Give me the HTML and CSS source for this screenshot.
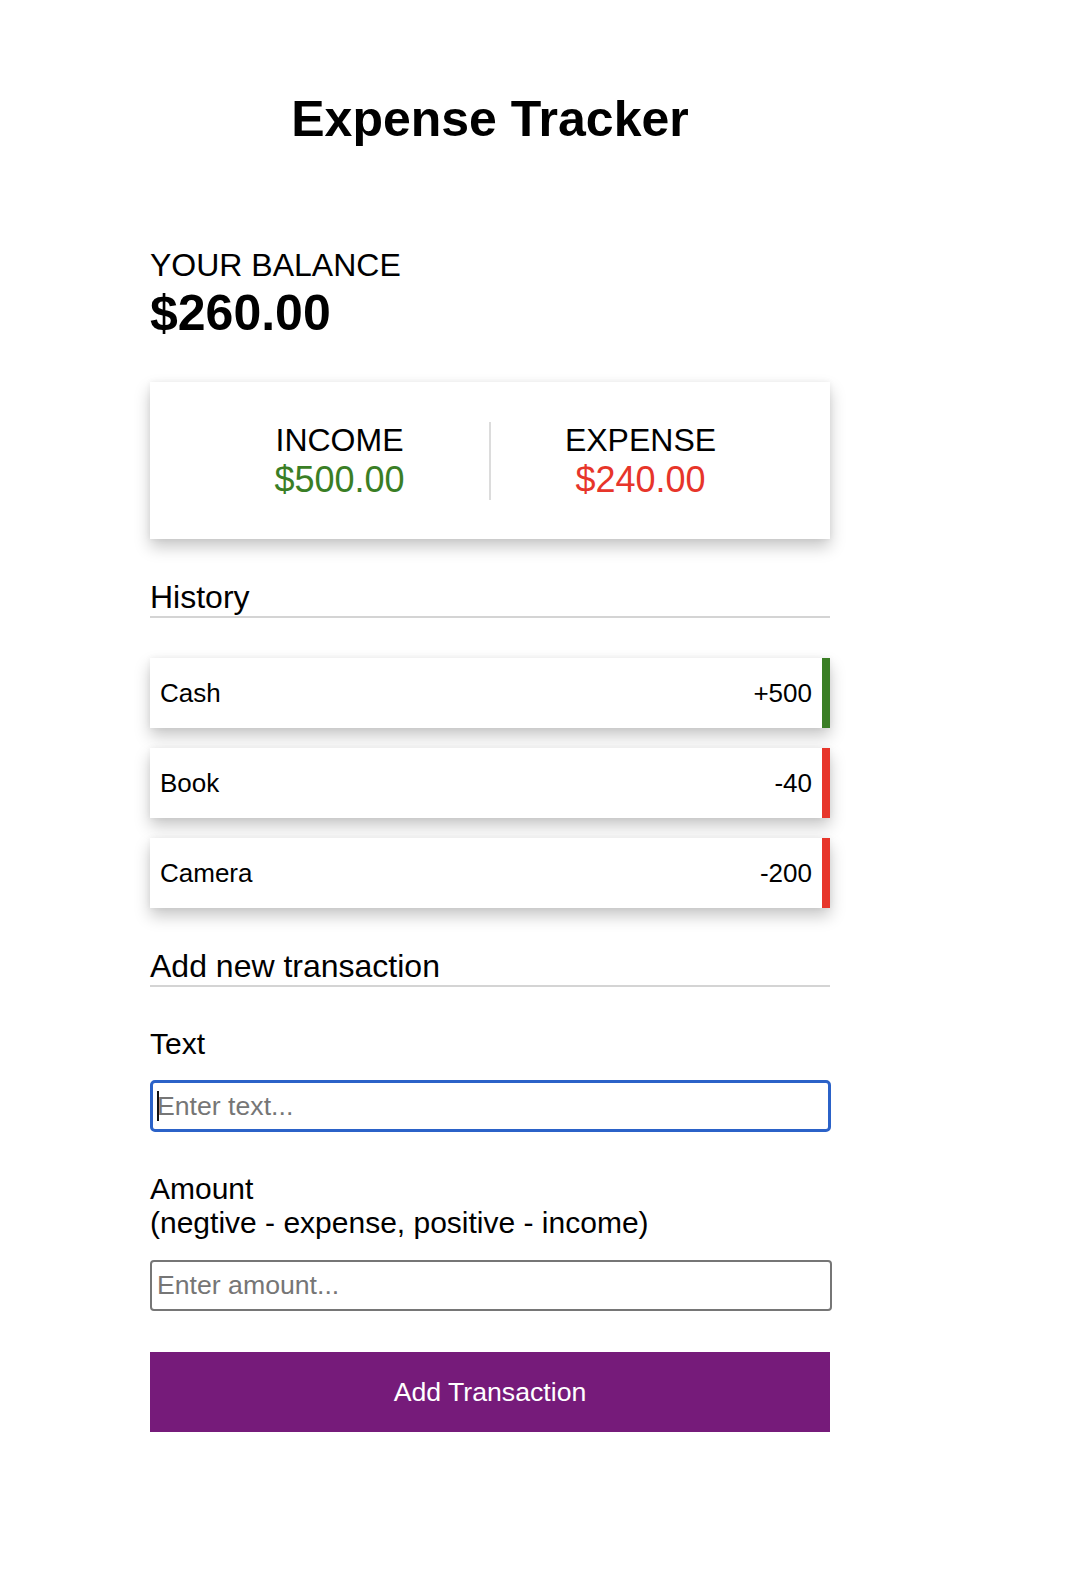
FILE: index.html
```html
<!DOCTYPE html>
<html lang="en">
<head>
<meta charset="utf-8">
<title>Expense Tracker</title>
<link rel="stylesheet" href="styles.css">
</head>
<body>
  <div class="container">
    <h1 class="title">Expense Tracker</h1>

    <h4 class="balance-label">YOUR BALANCE</h4>
    <h1 class="balance">$260.00</h1>

    <div class="inc-exp">
      <div class="inc-exp-col first">
        <h4 class="inc-exp-label">INCOME</h4>
        <p class="money plus">$500.00</p>
      </div>
      <div class="inc-exp-col">
        <h4 class="inc-exp-label">EXPENSE</h4>
        <p class="money minus">$240.00</p>
      </div>
    </div>

    <h3 class="section-title">History</h3>
    <ul class="list">
      <li class="item plus"><span>Cash</span><span>+500</span></li>
      <li class="item minus"><span>Book</span><span>-40</span></li>
      <li class="item minus"><span>Camera</span><span>-200</span></li>
    </ul>

    <h3 class="section-title">Add new transaction</h3>
    <form class="form">
      <div class="form-control">
        <label class="label" for="text">Text</label>
        <div class="input-wrap">
          <input class="input focused" type="text" id="text" placeholder="Enter text...">
          <span class="caret"></span>
        </div>
      </div>
      <div class="form-control">
        <label class="label" for="amount">Amount <br>(negtive - expense, positive - income)</label>
        <input class="input" type="text" id="amount" placeholder="Enter amount...">
      </div>
      <button class="btn" type="button">Add Transaction</button>
    </form>
  </div>
</body>
</html>
```

FILE: styles.css
```css
* {
  box-sizing: border-box;
}

body {
  margin: 0;
  background: #ffffff;
  font-family: "Liberation Sans", Arial, Helvetica, sans-serif;
  color: #000;
}

.container {
  width: 680px;
  margin: 0 0 0 150px;
  padding-top: 91px;
  padding-bottom: 100px;
}

.title {
  margin: 0;
  font-size: 50px;
  line-height: 56px;
  font-weight: 700;
  text-align: center;
}

.balance-label {
  margin: 98px 0 0;
  font-size: 32px;
  line-height: 40px;
  font-weight: 400;
}

.balance {
  margin: 0;
  font-size: 50px;
  line-height: 56px;
  font-weight: 700;
}

.inc-exp {
  margin-top: 41px;
  display: flex;
  background: #fff;
  padding: 40px 40px 39px;
  box-shadow: 0 8px 15px rgba(0, 0, 0, 0.22), 0 0 6px rgba(0, 0, 0, 0.06);
}

.inc-exp-col {
  flex: 1;
  text-align: center;
}

.inc-exp-col.first {
  border-right: 2px solid #dcdcdc;
}

.inc-exp-label {
  margin: 0;
  font-size: 32px;
  line-height: 37px;
  font-weight: 400;
}

.money {
  margin: 0;
  font-size: 36px;
  line-height: 41px;
}

.money.plus {
  color: #3a7e25;
}

.money.minus {
  color: #e7352a;
}

.section-title {
  margin: 40px 0 0;
  font-size: 32px;
  line-height: 37px;
  font-weight: 400;
  border-bottom: 2px solid #d4d4d4;
}

.list {
  list-style: none;
  margin: 40px 0 0;
  padding: 0;
  display: flex;
  flex-direction: column;
  gap: 20px;
}

.item {
  display: flex;
  justify-content: space-between;
  align-items: center;
  height: 70px;
  padding: 0 10px;
  background: #fff;
  font-size: 26px;
  line-height: 30px;
  box-shadow: 0 8px 15px rgba(0, 0, 0, 0.22), 0 0 6px rgba(0, 0, 0, 0.06);
}

.item.plus {
  border-right: 8px solid #3a7e25;
}

.item.minus {
  border-right: 8px solid #e7352a;
}

.form {
  margin: 0;
}

.form-control {
  display: flex;
  flex-direction: column;
}

.label {
  display: block;
  margin: 40px 0 20px;
  font-size: 30px;
  line-height: 34px;
}

.input-wrap {
  position: relative;
}

.input {
  display: block;
  width: calc(100% + 2px);
  height: 51px;
  margin: 0;
  padding: 0 5px;
  border: 2px solid #767676;
  border-radius: 4px;
  background: #fff;
  font-family: "Liberation Sans", Arial, Helvetica, sans-serif;
  font-size: 26.67px;
  color: #000;
  outline: none;
}

.input.focused {
  border: 3px solid #2b62c8;
  border-radius: 5px;
  padding: 0 4px;
  width: calc(100% + 1px);
  margin-top: -1px;
  height: 52px;
}

.input::placeholder {
  color: #767676;
}

.caret {
  position: absolute;
  left: 7px;
  top: 10px;
  width: 2px;
  height: 30px;
  background: #111;
}

.btn {
  display: block;
  width: 100%;
  height: 80px;
  margin: 41px 0 0;
  border: 0;
  padding: 0;
  background: #761b7a;
  color: #fff;
  font-family: "Liberation Sans", Arial, Helvetica, sans-serif;
  font-size: 26.67px;
  cursor: pointer;
}
```
